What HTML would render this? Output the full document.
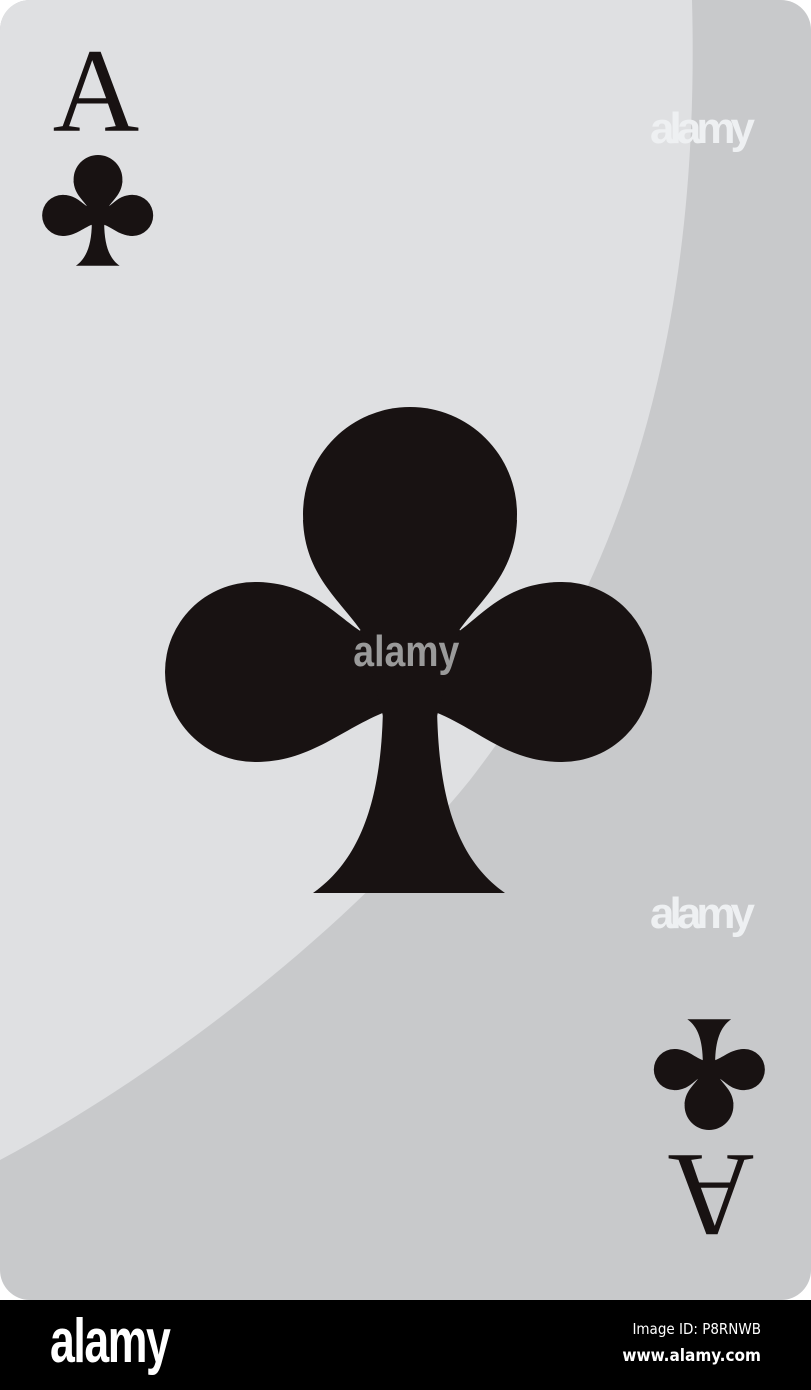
<!DOCTYPE html>
<html><head><style>
html,body{margin:0;padding:0;background:#fff;width:811px;height:1390px;overflow:hidden;}
.foot{position:absolute;left:0;top:1300px;width:811px;height:90px;background:#000;}
.logo{position:absolute;left:50px;top:6px;color:#fff;font:bold 62px "Liberation Sans Narrow","Liberation Sans",sans-serif;letter-spacing:-2px;transform:scaleX(0.72);transform-origin:left;}
.id{position:absolute;right:50px;top:20px;color:#fff;font:15px "DejaVu Sans Condensed","Liberation Sans",sans-serif;text-align:right;}
.www{position:absolute;right:50px;top:46px;color:#fff;font:bold 17px "DejaVu Sans Condensed","Liberation Sans",sans-serif;}
</style></head><body>
<svg width="811" height="1300" style="position:absolute;left:0;top:0">
<defs>
<clipPath id="c"><rect x="0" y="0" width="811" height="1300" rx="30"/></clipPath>
<g id="club" fill="#181212">
<circle cx="410" cy="514" r="107"/>
<circle cx="255" cy="672" r="90"/>
<circle cx="562" cy="672" r="90"/>
<path d="M303,520 C305,575 340,600 362,632 L458,632 C480,600 515,575 517,520 Z"/>
<path d="M255,582 C310,582 335,615 362,632 L385,712 C340,730 310,762 255,762 Z"/>
<path d="M562,582 C507,582 482,615 458,632 L435,712 C480,730 507,762 562,762 Z"/>
<path d="M360,630 L460,630 L437,716 L383,716 Z"/>
<path d="M383,705 C382,800 360,860 313,893 L505,893 C458,860 438,800 437,705 Z"/>
</g>
</defs>
<g clip-path="url(#c)">
<rect width="811" height="1300" fill="#c8c9cb"/>
<path d="M0,0 L692,0 C700,300 640,560 470,780 C340,940 150,1080 0,1160 Z" fill="#dfe0e2"/>
</g>
<use href="#club"/>
<use href="#club" transform="translate(98,155) scale(0.228) translate(-410,-407)"/>
<use href="#club" transform="translate(709,1130) rotate(180) scale(0.228) translate(-410,-407)"/>
<text x="96" y="131" text-anchor="middle" font-family="Liberation Serif,serif" font-size="120" fill="#181212">A</text>
<text x="711" y="1241" text-anchor="middle" font-family="Liberation Serif,serif" font-size="120" fill="#181212" transform="rotate(180 711 1198)">A</text>
<text x="406" y="666" text-anchor="middle" font-family="Liberation Sans,sans-serif" font-weight="bold" font-size="44" fill="#9a9a9a" transform="scale(0.85 1) translate(72 0)">alamy</text>
<g font-family="Liberation Sans,sans-serif" font-weight="bold" font-size="44" fill="#eef0f2">
<text x="650" y="143" textLength="105">alamy</text>
<text x="650" y="928" textLength="105">alamy</text>
</g>
</svg>
<div class="foot">
<div class="logo">alamy</div>
<div class="id">Image ID: P8RNWB</div>
<div class="www">www.alamy.com</div>
</div>
</body></html>
